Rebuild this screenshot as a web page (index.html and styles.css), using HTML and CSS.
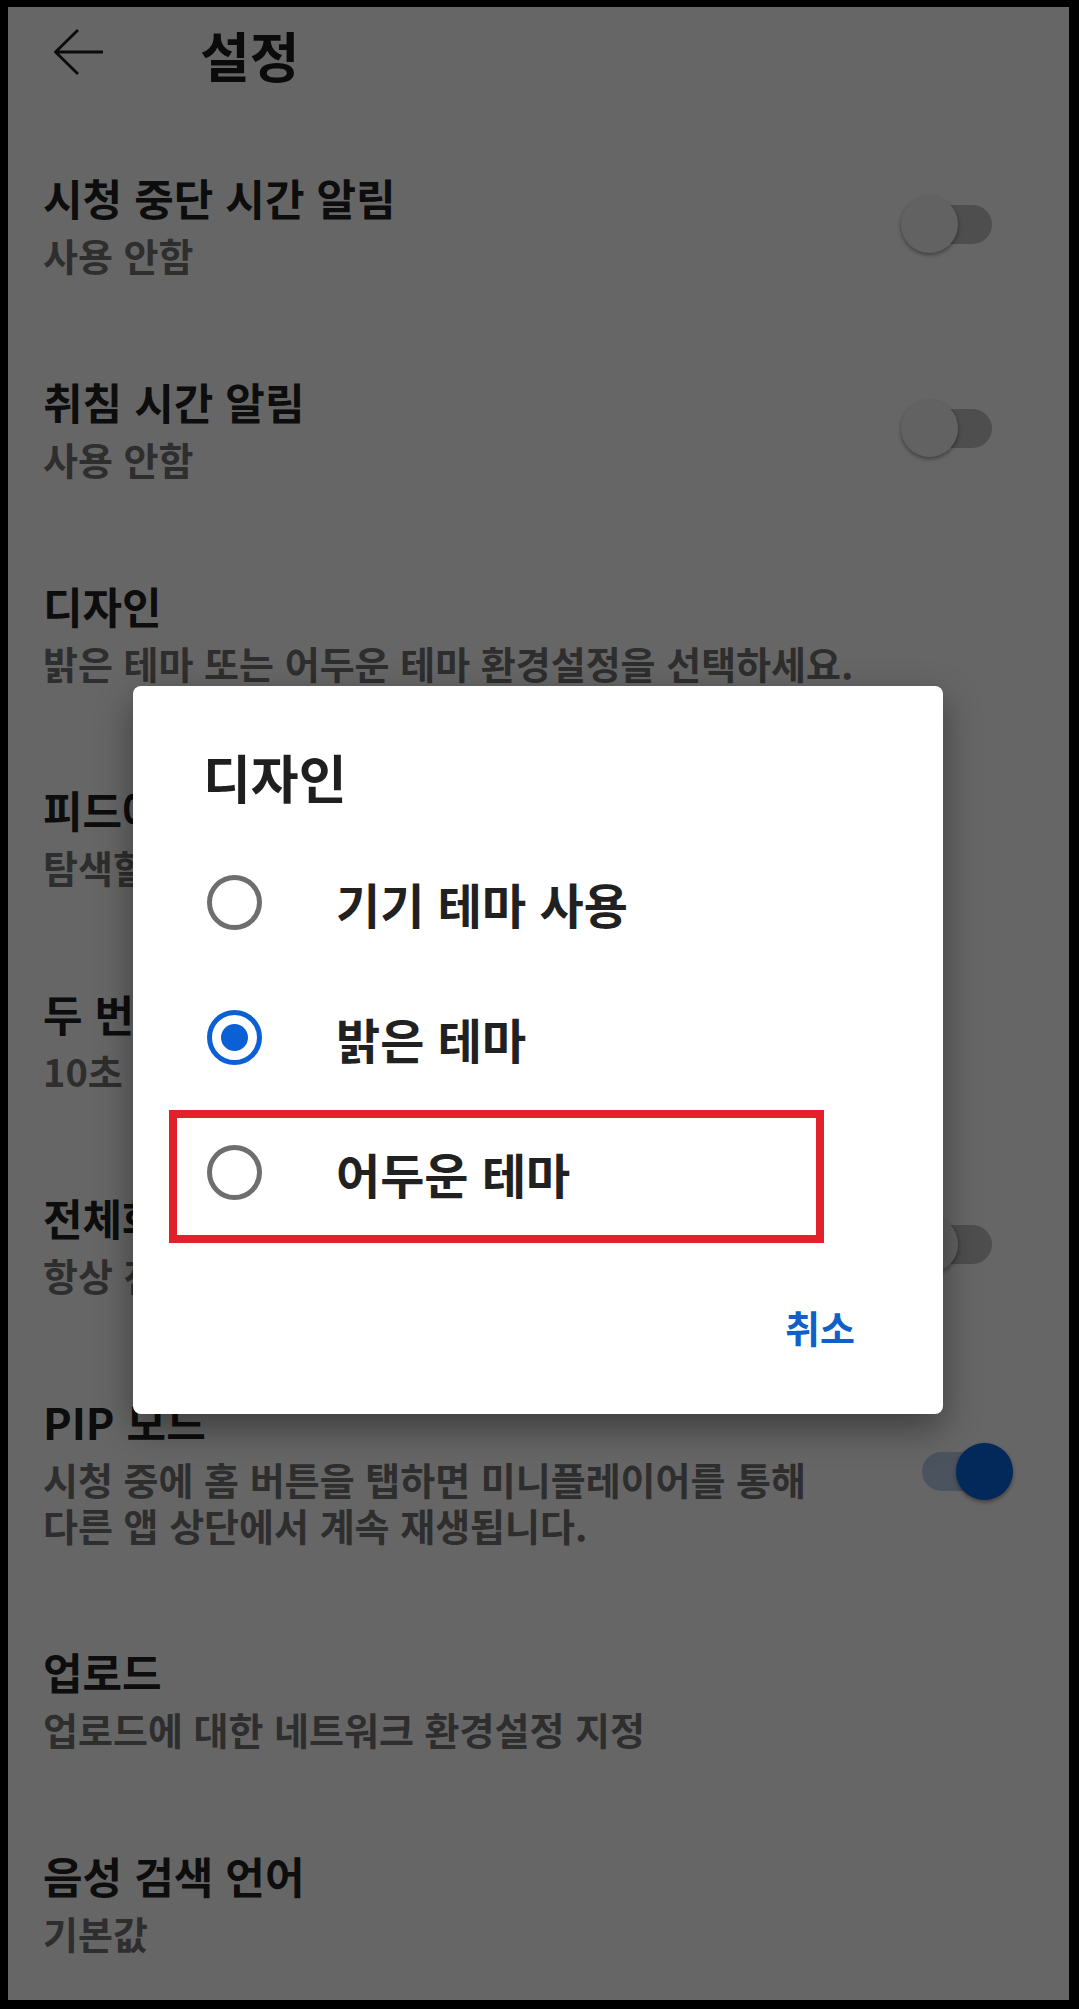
FILE: index.html
```html
<!DOCTYPE html>
<html lang="ko">
<head>
<meta charset="utf-8">
<title>설정</title>
<link rel="stylesheet" href="styles.css">
</head>
<body>
<div class="screen">
  <header class="appbar">
    <svg class="back" viewBox="0 0 50 46" aria-label="뒤로">
      <path d="M24 1 L1.5 23 L24 45 M1.5 23 H49" fill="none" stroke="#1c1c1c" stroke-width="2.8"/>
    </svg>
    <h1>설정</h1>
  </header>

  <ul class="settings">
    <li class="row">
      <div class="row-text"><div class="row-title">시청 중단 시간 알림</div><div class="row-sub">사용 안함</div></div>
      <span class="switch"></span>
    </li>
    <li class="row">
      <div class="row-text"><div class="row-title">취침 시간 알림</div><div class="row-sub">사용 안함</div></div>
      <span class="switch"></span>
    </li>
    <li class="row">
      <div class="row-text"><div class="row-title">디자인</div><div class="row-sub">밝은 테마 또는 어두운 테마 환경설정을 선택하세요.</div></div>
    </li>
    <li class="row">
      <div class="row-text"><div class="row-title">피드에서 음소거 재생</div><div class="row-sub">탐색할 때 Wi-Fi에서만</div></div>
    </li>
    <li class="row">
      <div class="row-text"><div class="row-title">두 번 탭하여 탐색</div><div class="row-sub">10초</div></div>
    </li>
    <li class="row">
      <div class="row-text"><div class="row-title">전체화면 확대/축소</div><div class="row-sub">항상 전체화면으로 확대/축소</div></div>
      <span class="switch"></span>
    </li>
    <li class="row">
      <div class="row-text"><div class="row-title">PIP 모드</div><div class="row-sub">시청 중에 홈 버튼을 탭하면 미니플레이어를 통해 다른 앱 상단에서 계속 재생됩니다.</div></div>
      <span class="switch on"></span>
    </li>
    <li class="row">
      <div class="row-text"><div class="row-title">업로드</div><div class="row-sub">업로드에 대한 네트워크 환경설정 지정</div></div>
    </li>
    <li class="row">
      <div class="row-text"><div class="row-title">음성 검색 언어</div><div class="row-sub">기본값</div></div>
    </li>
  </ul>

  <div class="scrim"></div>

  <div class="dialog" role="dialog">
    <h2>디자인</h2>
    <ul class="options">
      <li class="option"><span class="radio"></span><span class="option-label">기기 테마 사용</span></li>
      <li class="option"><span class="radio checked"></span><span class="option-label">밝은 테마</span></li>
      <li class="option marked"><span class="radio"></span><span class="option-label">어두운 테마</span></li>
    </ul>
    <div class="dialog-actions">
      <button class="text-btn">취소</button>
    </div>
  </div>
</div>
</body>
</html>
```

FILE: styles.css
```css
* {
  box-sizing: border-box;
  margin: 0;
  padding: 0;
}

html,
body {
  background: #000;
}

body {
  font-family: "Noto Sans CJK KR", "Noto Sans", sans-serif;
}

.screen {
  position: relative;
  margin: 7px 10px 0 8px;
  height: 1993px;
  background: #fff;
  overflow: hidden;
}

/* top app bar */
.appbar {
  display: flex;
  align-items: flex-start;
  height: 96px;
  padding: 16px 0 0 46px;
}

.back {
  display: block;
  width: 50px;
  height: 46px;
  margin-top: 6px;
  flex: none;
}

.appbar h1 {
  margin-left: 96px;
  font-size: 54px;
  line-height: 64px;
  font-weight: 700;
  color: #1c1c1c;
}

/* settings list */
.settings {
  list-style: none;
  padding-top: 19px;
}

.row {
  display: flex;
  align-items: center;
  gap: 54px;
  padding: 48px 77px 48px 35px;
}

.row-text {
  flex: 1;
  min-width: 0;
}

.row-title {
  font-size: 43px;
  line-height: 54px;
  font-weight: 700;
  color: #212121;
}

.row-sub {
  margin-top: 8px;
  font-size: 38px;
  line-height: 46px;
  font-weight: 700;
  color: #747474;
  word-break: keep-all;
}

.switch {
  position: relative;
  flex: none;
  width: 70px;
  height: 39px;
  border-radius: 20px;
  background: #c2c2c2;
}

.switch::after {
  content: "";
  position: absolute;
  top: -9px;
  left: -21px;
  width: 57px;
  height: 57px;
  border-radius: 50%;
  background: #f6f6f6;
  box-shadow: 0 2px 4px rgba(0, 0, 0, 0.4);
}

.switch.on {
  background: #bccfea;
}

.switch.on::after {
  left: 34px;
  background: #0766e0;
}

/* modal */
.scrim {
  position: absolute;
  inset: 0;
  background: rgba(0, 0, 0, 0.6);
}

.dialog {
  position: absolute;
  left: 125px;
  top: 679px;
  width: 810px;
  padding: 59px 0 64px;
  background: #fff;
  border-radius: 8px;
  box-shadow: 0 14px 36px rgba(0, 0, 0, 0.4);
}

.dialog h2 {
  padding-left: 70px;
  font-size: 52px;
  line-height: 64px;
  font-weight: 700;
  color: #1f1f1f;
}

.options {
  list-style: none;
  margin-top: 26px;
}

.option {
  position: relative;
  display: flex;
  align-items: center;
  gap: 74px;
  height: 135px;
  padding-left: 74px;
}

.option.marked::after {
  content: "";
  position: absolute;
  left: 36px;
  right: 119px;
  top: 5px;
  bottom: -3px;
  border: 8px solid #e3212b;
}

.radio {
  display: grid;
  place-items: center;
  flex: none;
  width: 55px;
  height: 55px;
  border-radius: 50%;
  border: 5.5px solid #6e6e6e;
}

.radio.checked {
  border-color: #0b60d6;
}

.radio.checked::after {
  content: "";
  width: 27px;
  height: 27px;
  border-radius: 50%;
  background: #0b60d6;
}

.option-label {
  font-size: 48px;
  line-height: 60px;
  font-weight: 700;
  color: #212121;
}

.dialog-actions {
  display: flex;
  justify-content: flex-end;
  margin-top: 64px;
  padding-right: 74px;
}

.text-btn {
  padding: 0 14px;
  border: none;
  background: none;
  font-family: inherit;
  font-size: 38px;
  line-height: 46px;
  font-weight: 700;
  color: #1060c8;
}
```
